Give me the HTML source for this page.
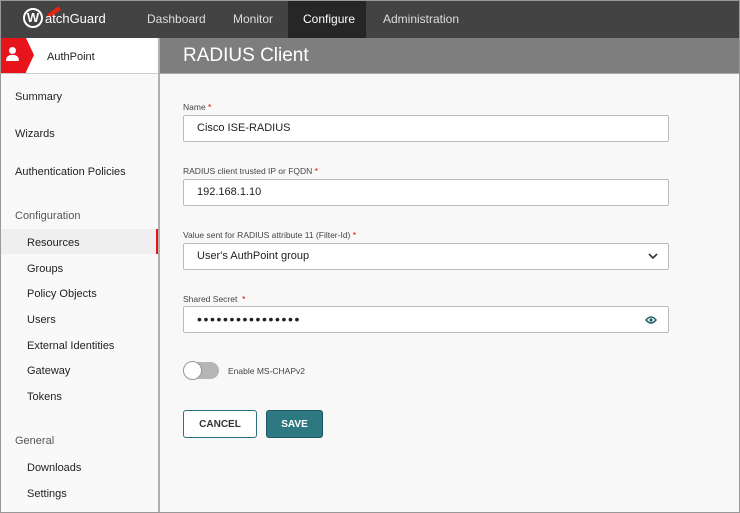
<!DOCTYPE html><html><head><style>
body{margin:0;width:740px;height:513px;overflow:hidden;font-family:"Liberation Sans",sans-serif;background:#f8f8f8;position:relative}
.top{position:absolute;left:0;top:0;width:740px;height:38px;background:#434343}
.top span{position:absolute;top:12px;color:#ddd;font-size:12px}
.sel{position:absolute;left:288px;top:0;width:78px;height:38px;background:#262626}
.side{position:absolute;left:0;top:38px;width:158px;height:475px;background:#f9f9f9;border-right:2px solid #b0b0b0}
.hd{position:absolute;left:160px;top:38px;width:580px;height:35px;background:#7e7e7e;border-bottom:1px solid #aaa}
.hd div{position:absolute;left:23px;top:7px;color:#fff;font-size:19px}
.s{position:absolute;font-size:11px;color:#222}
.lab{position:absolute;left:183px;font-size:8.5px;color:#444}
.lab b{color:#d00;font-weight:normal}
.in{position:absolute;left:183px;width:484px;height:25px;background:#fff;border:1px solid #bbb;border-radius:2px;font-size:11px;color:#222;line-height:25px;text-indent:13px}
.btn{position:absolute;top:410px;height:26px;border-radius:3px;font-size:10px;font-weight:bold;text-align:center;line-height:28px}
</style></head><body>
<div class="top"><div class="sel"></div>
<div style="position:absolute;left:23px;top:8px;width:20px;height:20px;border:2px solid #fff;border-radius:50%;box-sizing:border-box;color:#fff;font-weight:bold;font-size:13px;line-height:16px;text-align:center">W</div>
<div style="position:absolute;left:47px;top:10px;width:14px;height:4px;background:#e21;transform:rotate(-35deg)"></div>
<span style="left:45px;top:11px;color:#fff;font-size:13px">atchGuard</span>
<span style="left:147px">Dashboard</span><span style="left:233px">Monitor</span><span style="left:303px;color:#fff">Configure</span><span style="left:383px">Administration</span></div>
<div class="side">
<div style="position:absolute;left:0;top:0;width:158px;height:35px;background:#fff;border-bottom:1px solid #ccc"></div>
<div style="position:absolute;left:0;top:0;width:26px;height:35px;background:#e8141c"></div>
<div style="position:absolute;left:26px;top:0;width:0;height:0;border-top:17.5px solid transparent;border-bottom:17.5px solid transparent;border-left:8px solid #e8141c"></div>
<div style="position:absolute;left:9px;top:9px;width:7px;height:7px;border-radius:50%;background:#fff"></div>
<div style="position:absolute;left:6px;top:17px;width:13px;height:6px;border-radius:6px 6px 1px 1px;background:#fff"></div>
<div class="s" style="left:47px;top:13px">AuthPoint</div>
<div style="position:absolute;left:0;top:191px;width:158px;height:25px;background:#efefef"></div>
<div style="position:absolute;left:156px;top:191px;width:2px;height:25px;background:#e8141c"></div>
</div>
<div class="s" style="left:15px;top:91px">Summary</div>
<div class="s" style="left:15px;top:128px">Wizards</div>
<div class="s" style="left:15px;top:166px">Authentication Policies</div>
<div class="s" style="left:15px;top:210px;color:#555">Configuration</div>
<div class="s" style="left:27px;top:237px">Resources</div>
<div class="s" style="left:27px;top:263px">Groups</div>
<div class="s" style="left:27px;top:288px">Policy Objects</div>
<div class="s" style="left:27px;top:314px">Users</div>
<div class="s" style="left:27px;top:340px">External Identities</div>
<div class="s" style="left:27px;top:365px">Gateway</div>
<div class="s" style="left:27px;top:391px">Tokens</div>
<div class="s" style="left:15px;top:435px;color:#555">General</div>
<div class="s" style="left:27px;top:462px">Downloads</div>
<div class="s" style="left:27px;top:488px">Settings</div>
<div class="hd"><div>RADIUS Client</div></div>
<div class="lab" style="top:102px">Name <b>*</b></div>
<div class="in" style="top:115px">Cisco ISE-RADIUS</div>
<div class="lab" style="top:166px">RADIUS client trusted IP or FQDN <b>*</b></div>
<div class="in" style="top:179px">192.168.1.10</div>
<div class="lab" style="top:230px">Value sent for RADIUS attribute 11 (Filter-Id) <b>*</b></div>
<div class="in" style="top:243px">User's AuthPoint group<svg style="position:absolute;right:10px;top:9px" width="10" height="7"><path d="M1 1l4 4 4-4" stroke="#333" stroke-width="1.6" fill="none"/></svg></div>
<div class="lab" style="top:294px">Shared Secret &nbsp;<b>*</b></div>
<div class="in" style="top:306px;font-size:14px;letter-spacing:1.6px">••••••••••••••••<svg style="position:absolute;right:11px;top:9px" width="12" height="8"><path d="M1 4Q6-2 11 4Q6 10 1 4Z" fill="none" stroke="#1f5f6a" stroke-width="1.5"/><circle cx="6" cy="4" r="1.6" fill="#1f5f6a"/></svg></div>
<div style="position:absolute;left:183px;top:362px;width:36px;height:17px;border-radius:9px;background:#b5b5b5"></div>
<div style="position:absolute;left:183px;top:361px;width:17px;height:17px;border-radius:50%;background:#fff;border:1px solid #999"></div>
<div class="lab" style="left:228px;top:366px">Enable MS-CHAPv2</div>
<div class="btn" style="left:183px;width:72px;background:#fff;border:1px solid #2b6f7a;color:#333">CANCEL</div>
<div class="btn" style="left:266px;width:55px;background:#2e7882;border:1px solid #1e5560;color:#fff">SAVE</div>
<div style="position:absolute;left:0;top:0;width:738px;height:511px;border:1px solid #999"></div>
</body></html>
